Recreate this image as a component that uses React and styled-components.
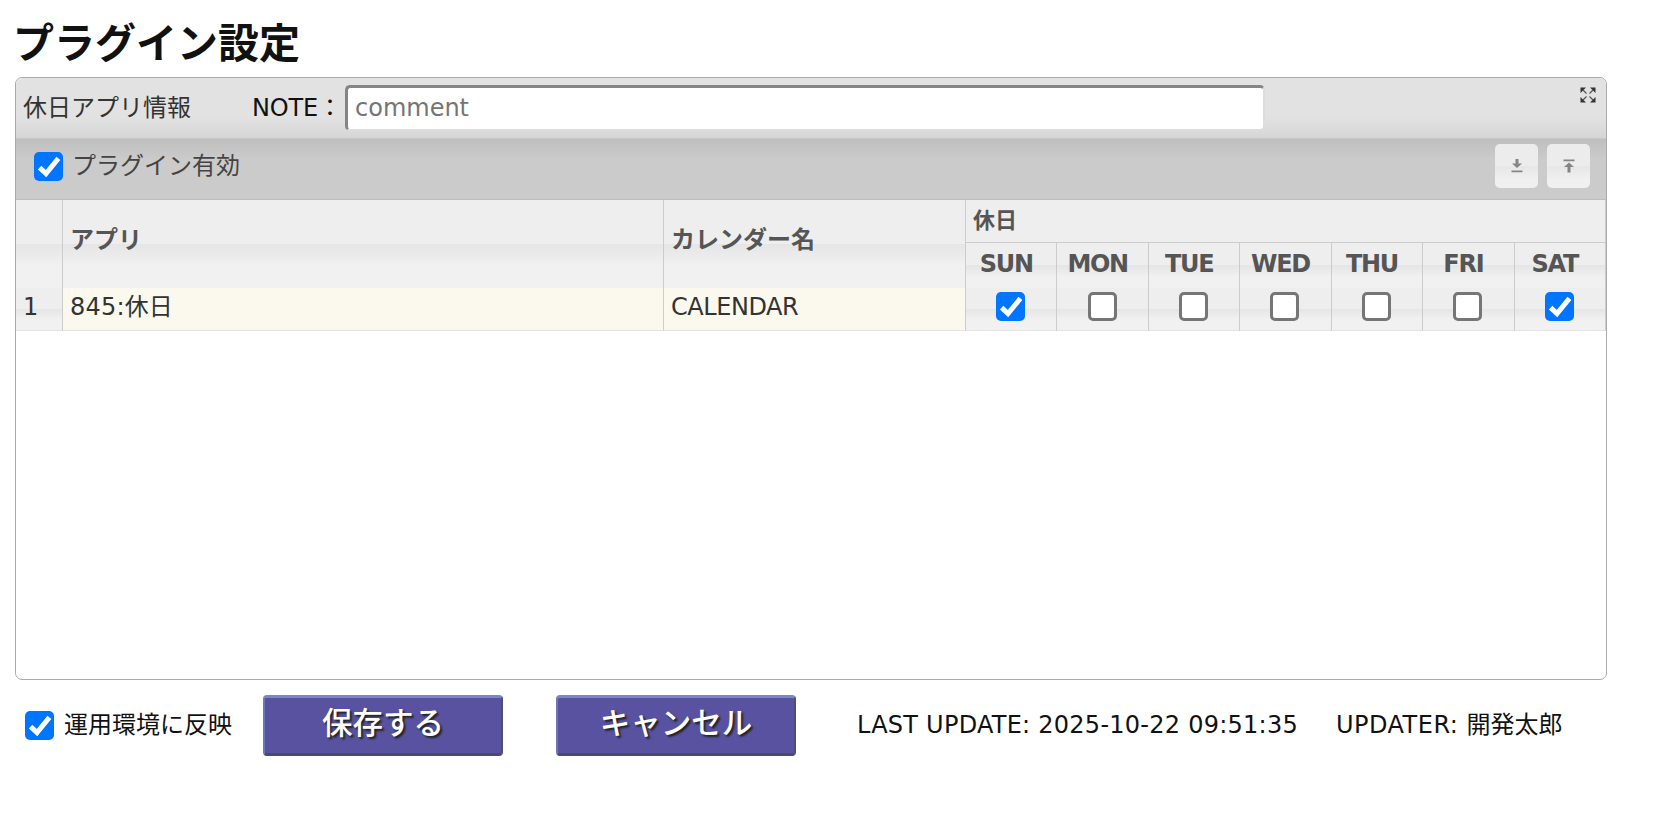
import React from "react";
import styled, { createGlobalStyle } from "styled-components";

const JP = `"DejaVu Sans", "Noto Sans CJK JP", sans-serif`;

const Global = createGlobalStyle`
  html, body { margin: 0; padding: 0; background: #fff; }
  body { font-family: ${JP}; line-height: 32px; color: #111; width: 1673px; height: 817px; overflow: hidden; }
`;

const Page = styled.div`
  padding: 16px 66px 0 15px;
  box-sizing: border-box;
`;

const Title = styled.h1`
  margin: 0 0 12px -2px;
  height: 49px;
  line-height: 49px;
  font-size: 41px;
  font-weight: 700;
  color: #111;
  font-family: "Noto Sans CJK JP", sans-serif;
`;

const Panel = styled.section`
  height: 603px;
  box-sizing: border-box;
  border: 1px solid #aaa;
  border-radius: 7px;
  overflow: hidden;
  background: #fff;
`;

const Latin = styled.span`
  letter-spacing: ${(p) => p.$track ?? 0}px;
`;

const Head = styled.div`
  position: relative;
  height: 61px;
  box-sizing: border-box;
  display: flex;
  align-items: center;
  padding: 0 0 1px 7px;
  font-size: 24px;
  color: #333;
  border-bottom: 1px solid #c8c8c8;
  background: linear-gradient(#e2e2e2 0%, #e2e2e2 65%, #d6d6d6 100%);
`;

const HeadTitle = styled.span`
  width: 229px;
`;

const NoteLabel = styled.span`
  width: 93px;
  color: #111;
  white-space: nowrap;
`;

const NoteInput = styled.input`
  width: 920px;
  height: 46px;
  box-sizing: border-box;
  padding: 0 7px;
  font: 24px ${JP};
  border-style: solid;
  border-width: 3px 2px 2px 3px;
  border-color: #858585 #e0dcdc #e0dcdc #858585;
  border-radius: 5px;
  background: #fff;
  outline: none;
  &::placeholder { color: #757575; opacity: 1; }
`;

const ExpandButton = styled.span`
  position: absolute;
  top: 9px;
  right: 10px;
  width: 16px;
  height: 16px;
  display: block;
  line-height: 0;
`;

const Toolbar = styled.div`
  height: 61px;
  box-sizing: border-box;
  display: flex;
  align-items: center;
  gap: 9px;
  padding: 0 16px 6px 18px;
  border-bottom: 1px solid #bdbdbd;
  background: linear-gradient(#bfbfbf 0%, #cbcbcb 35%, #cbcbcb 100%);
`;

const ToolbarLabel = styled.label`
  flex: 1;
  display: flex;
  align-items: center;
  gap: 9px;
  font-size: 24px;
  color: #444;
`;

const LabelText = styled.span`
  padding-bottom: ${(p) => p.$lift ?? 0}px;
`;

const gloss = `linear-gradient(#eeeeee 0%, #eeeeee 50%, #e5e5e5 50%, #f1f1f1 75%, #f1f1f1 100%)`;

const ToolButton = styled.button`
  width: 43px;
  height: 44px;
  padding: 0;
  border: 0;
  border-radius: 5px;
  display: flex;
  align-items: center;
  justify-content: center;
  background: linear-gradient(#ececec 0%, #ececec 50%, #e6e6e6 50%, #f0f0f0 80%);
`;

const Table = styled.table`
  width: 1590px;
  table-layout: fixed;
  border-collapse: separate;
  border-spacing: 0;
  color: #444;
  font-size: 24px;
`;

const Th = styled.th`
  box-sizing: border-box;
  padding: ${(p) => p.$pad || "0 0 8px 7px"};
  height: ${(p) => p.$h}px;
  text-align: ${(p) => p.$align || "left"};
  font-size: ${(p) => p.$size || 24}px;
  font-weight: 700;
  color: #555;
  background: ${(p) => (p.$flat ? "#eeeeee" : gloss)};
  border-right: 1px solid #cccccc;
  border-bottom: ${(p) => (p.$flat ? "1px solid #cccccc" : "0")};
  white-space: nowrap;
`;

const Td = styled.td`
  box-sizing: border-box;
  height: 43px;
  padding: ${(p) => (p.$center ? "0 9px 8px 8px" : "0 8px 4px 7px")};
  color: #333;
  border-right: 1px solid #cccccc;
  border-bottom: 1px solid #e4e4e4;
  background: ${(p) => (p.$plain ? "#fbf8ee" : gloss)};
  text-align: ${(p) => (p.$center ? "center" : "left")};
  white-space: nowrap;
`;

const Box = styled.span`
  box-sizing: border-box;
  width: 29px;
  height: 29px;
  flex: none;
  display: inline-flex;
  align-items: center;
  justify-content: center;
  vertical-align: middle;
  border-radius: 5px;
  border: ${(p) => (p.$on ? "0" : "3px solid #767676")};
  background: ${(p) => (p.$on ? "#0075ff" : "#fff")};
`;

const Footer = styled.div`
  display: flex;
  align-items: center;
  height: 61px;
  margin-top: 15px;
  padding-left: 10px;
  font-size: 24px;
  color: #111;
`;

const FooterLabel = styled.label`
  width: 238px;
  display: flex;
  align-items: center;
  gap: 10px;
  white-space: nowrap;
`;

const Action = styled.button`
  width: 240px;
  height: 61px;
  margin-right: ${(p) => p.$gap}px;
  padding: 0 0 10px;
  box-sizing: border-box;
  border-style: solid;
  border-width: 3px 2px 3px 2px;
  border-color: #7a88c2 #4f4c80 #4a4a6e #6f76b4;
  border-radius: 4px;
  background: #5852a0;
  color: #fff;
  font: 500 30.5px "Noto Sans CJK JP", sans-serif;
  text-shadow: 2px 2px 2px #222;
`;

const Meta = styled.span`
  white-space: nowrap;
  margin-right: ${(p) => p.$gap || 0}px;
  padding-bottom: 2px;
`;

const Check = ({ on }) => (
  <Box $on={on}>
    {on && (
      <svg width="29" height="29" viewBox="0 0 29 29" aria-hidden="true">
        <path d="M5.6 15.6 L12 21.6 L24.4 6.4" fill="none" stroke="#fff" strokeWidth="5" />
      </svg>
    )}
  </Box>
);

const Expand = () => (
  <svg width="16" height="16" viewBox="0 0 16 16" aria-hidden="true">
    <g fill="#333">
      <path d="M0.5 0.5h5.5L0.5 6z" />
      <path d="M15.5 0.5v5.5L10 0.5z" />
      <path d="M0.5 15.5v-5.5L6 15.5z" />
      <path d="M15.5 15.5h-5.5L15.5 10z" />
    </g>
    <path d="M3 3L6.5 6.5M13 3L9.5 6.5M3 13L6.5 9.5M13 13L9.5 9.5" stroke="#555" strokeWidth="1.2" fill="none" />
  </svg>
);

const DownIcon = () => (
  <svg width="14" height="14" viewBox="0 0 14 14" aria-hidden="true">
    <path d="M5.5 0h3v4.5H12L7 9 2 4.5h3.5z M1.5 11.5h11v1.8h-11z" fill="#858585" />
  </svg>
);

const UpIcon = () => (
  <svg width="14" height="14" viewBox="0 0 14 14" aria-hidden="true">
    <path d="M1.5 0.5h11v1.8h-11z M7 3.5l5 4.5H8.5v5.5h-3V8H2z" fill="#858585" />
  </svg>
);

const days = [
  ["SUN", true],
  ["MON", false],
  ["TUE", false],
  ["WED", false],
  ["THU", false],
  ["FRI", false],
  ["SAT", true],
];

export default function App() {
  return (
    <Page>
      <Global />
      <Title>プラグイン設定</Title>
      <Panel>
        <Head>
          <HeadTitle>休日アプリ情報</HeadTitle>
          <NoteLabel>
            <Latin $track={-0.2}>NOTE</Latin>：
          </NoteLabel>
          <NoteInput placeholder="comment" />
          <ExpandButton>
            <Expand />
          </ExpandButton>
        </Head>
        <Toolbar>
          <ToolbarLabel>
            <Check on />
            <LabelText $lift={1}>プラグイン有効</LabelText>
          </ToolbarLabel>
          <ToolButton>
            <DownIcon />
          </ToolButton>
          <ToolButton>
            <UpIcon />
          </ToolButton>
        </Toolbar>
        <Table>
          <colgroup>
            <col style={{ width: 47 }} />
            <col style={{ width: 601 }} />
            <col style={{ width: 302 }} />
            {days.map(([d]) => (
              <col key={d} />
            ))}
          </colgroup>
          <thead>
            <tr>
              <Th rowSpan={2} $h={88} />
              <Th rowSpan={2} $h={88}>
                アプリ
              </Th>
              <Th rowSpan={2} $h={88}>
                カレンダー名
              </Th>
              <Th colSpan={7} $h={43} $flat $size={22} $pad="0 0 1px 7px">
                休日
              </Th>
            </tr>
            <tr>
              {days.map(([d]) => (
                <Th key={d} $h={45} $align="center" $pad="0 10px 4px 0">
                  <Latin $track={-1.3}>{d}</Latin>
                </Th>
              ))}
            </tr>
          </thead>
          <tbody>
            <tr>
              <Td>
                <Latin>1</Latin>
              </Td>
              <Td $plain>
                <Latin $track={0.2}>845:</Latin>休日
              </Td>
              <Td $plain>
                <Latin $track={-0.45}>CALENDAR</Latin>
              </Td>
              {days.map(([d, on]) => (
                <Td key={d} $center>
                  <Check on={on} />
                </Td>
              ))}
            </tr>
          </tbody>
        </Table>
      </Panel>
      <Footer>
        <FooterLabel>
          <Check on />
          <LabelText $lift={2}>運用環境に反映</LabelText>
        </FooterLabel>
        <Action $gap={53}>保存する</Action>
        <Action $gap={61}>キャンセル</Action>
        <Meta $gap={38}>
          <Latin $track={0.25}>LAST UPDATE: 2025-10-22 09:51:35</Latin>
        </Meta>
        <Meta>
          <Latin $track={0.5}>UPDATER: </Latin>開発太郎
        </Meta>
      </Footer>
    </Page>
  );
}
